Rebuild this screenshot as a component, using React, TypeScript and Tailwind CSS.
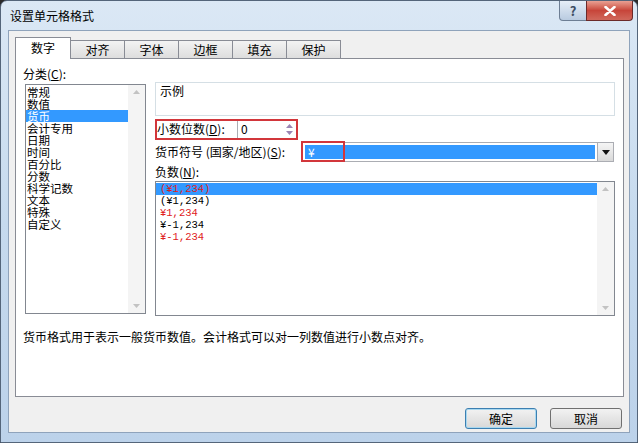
import * as React from 'react'

const font = { fontFamily: '"Noto Sans CJK SC", "Liberation Sans", sans-serif' }
const mono = { fontFamily: '"Liberation Mono", "Noto Sans CJK SC", monospace' }

const tabs = ['数字', '对齐', '字体', '边框', '填充', '保护']
const categories = ['常规', '数值', '货币', '会计专用', '日期', '时间', '百分比', '分数', '科学记数', '文本', '特殊', '自定义']
const negatives = [
	{ text: '(¥1,234)', red: true },
	{ text: '(¥1,234)', red: false },
	{ text: '¥1,234', red: true },
	{ text: '¥-1,234', red: false },
	{ text: '¥-1,234', red: true },
]

function ScrollBar() {
	return (
		<div className="flex h-full w-[17px] flex-col items-center justify-between bg-[#f4f4f4] py-[5px]">
			<svg width="7" height="4" viewBox="0 0 7 4">
				<path d="M0 4 L3.5 0 L7 4 Z" fill="#c2c2c2" />
			</svg>
			<svg width="7" height="4" viewBox="0 0 7 4">
				<path d="M0 0 L3.5 4 L7 0 Z" fill="#c2c2c2" />
			</svg>
		</div>
	)
}

function Tab({ label, active }: { label: string; active: boolean }) {
	if (active) {
		return (
			<div className="relative z-10 flex h-[22px] w-[56px] items-center justify-center border-x border-t border-[#898c95] bg-white pb-[1px] text-[12px] text-black">
				{label}
			</div>
		)
	}
	return (
		<div className="-ml-px flex h-[19px] w-[55px] items-center justify-center border border-b-0 border-[#898c95] bg-gradient-to-b from-[#f3f3f3] to-[#dcdcdc] text-[12px] text-black">
			{label}
		</div>
	)
}

export default function App() {
	return (
		<div className="h-[443px] w-[638px] overflow-hidden bg-[#2a2a2a]" style={font}>
			<div className="flex h-[443px] w-[638px] flex-col rounded-t-[7px] border border-[#54657a] bg-gradient-to-b from-[#dbe8f5] via-[#c6daee] to-[#bcd2ea]">
				{/* title bar */}
				<div className="flex h-[29px] shrink-0 items-start justify-between">
					<div className="pl-[9px] pt-[7px] text-[12px] leading-[16px] text-black">设置单元格格式</div>
					<div className="mr-[4px] flex">
						<div className="flex h-[20px] w-[28px] items-center justify-center rounded-bl-[4px] border border-t-0 border-[#6d7e94] bg-gradient-to-b from-[#e6eef7] to-[#b9cbe0] text-[13px] font-bold leading-none text-[#3d4d63]">
							?
						</div>
						<div className="-ml-px flex h-[20px] w-[47px] items-center justify-center rounded-br-[4px] border border-t-0 border-[#6b2a2a] bg-gradient-to-b from-[#e8a093] via-[#c7453a] to-[#d0685c]">
							<svg width="12" height="10" viewBox="0 0 12 10">
								<path d="M1.5 1 L10.5 9 M10.5 1 L1.5 9" stroke="#ffffff" strokeWidth="2.6" strokeLinecap="round" />
							</svg>
						</div>
					</div>
				</div>

				{/* client area */}
				<div className="mx-[7px] flex h-[403px] flex-col border border-[#8fa3bb] bg-[#f0f0f0] pl-[6px] pr-[7px] pt-[6px]">
					<div className="flex h-[22px] items-end">
						{tabs.map((t, i) => (
							<Tab key={t} label={t} active={i === 0} />
						))}
					</div>
					<div className="-mt-px flex h-[339px] w-[609px] flex-col border border-[#898c95] bg-white pl-[7px] pt-[8px] text-[12px] text-black">
						<div className="flex">
							{/* left column */}
							<div className="flex w-[132px] flex-col">
								<div className="h-[14px] leading-[14px]">分类(<u>C</u>):</div>
								<div className="ml-[2px] mt-[3px] flex h-[230px] w-[121px] border border-[#828790] bg-white">
									<div className="flex flex-1 flex-col pt-[1px]">
										{categories.map((c) => (
											<div
												key={c}
												className={
													c === '货币'
														? 'h-[12px] bg-[#3399ff] pl-[1px] text-[11.5px] leading-[12px] text-white'
														: 'h-[12px] pl-[1px] text-[11.5px] leading-[12px]'
												}
											>
												{c}
											</div>
										))}
									</div>
									<ScrollBar />
								</div>
							</div>

							{/* right column */}
							<div className="flex w-[460px] flex-col">
								<div className="mt-[15px] h-[34px] border border-[#d5dfe5] pl-[4px] pt-[1px] leading-[14px]">示例</div>

								<div className="relative mt-[3px] flex h-[20px] items-center">
									<div className="w-[82px] pl-[2px]">小数位数(<u>D</u>):</div>
									<div className="flex h-[19px] w-[60px] items-center border border-[#abadb3] bg-white">
										<span className="flex-1 pl-[3px]">0</span>
										<div className="flex w-[12px] flex-col items-center gap-[3px] pr-[1px]">
											<svg width="7" height="4" viewBox="0 0 7 4">
												<path d="M0 4 L3.5 0 L7 4 Z" fill="#9a86b4" />
											</svg>
											<svg width="7" height="4" viewBox="0 0 7 4">
												<path d="M0 0 L3.5 4 L7 0 Z" fill="#9a86b4" />
											</svg>
										</div>
									</div>
									<div className="absolute left-0 top-0 h-[21px] w-[143px] border-2 border-[#d2363b]" />
								</div>

								<div className="relative mt-[3px] flex h-[20px] items-center">
									<div className="w-[147px]">货币符号 (国家/地区)(<u>S</u>):</div>
									<div className="flex h-[20px] w-[312px] border border-[#abadb3] bg-white">
										<div className="m-[2px] flex flex-1 items-center bg-[#3399ff] pl-[3px] leading-[12px] text-white">¥</div>
										<div className="flex w-[16px] items-center justify-center border-l border-[#abadb3] bg-gradient-to-b from-[#f5f5f5] to-[#d9d9d9]">
											<svg width="8" height="5" viewBox="0 0 8 5">
												<path d="M0 0 L4 5 L8 0 Z" fill="#111111" />
											</svg>
										</div>
									</div>
									<div className="absolute left-[146px] top-[-1px] h-[21px] w-[44px] border-2 border-[#d2363b]" />
								</div>

								<div className="mt-[3px] h-[14px] leading-[14px]">负数(<u>N</u>):</div>
								<div className="mt-[2px] flex h-[135px] w-[460px] border border-[#828790] bg-white">
									<div className="flex flex-1 flex-col pt-[1px]" style={mono}>
										{negatives.map((n, i) => (
											<div
												key={i}
												className={[
													'h-[12px] pl-[4px] text-[10.5px] leading-[12px]',
													i === 0 ? 'bg-[#3399ff]' : '',
													n.red ? 'text-[#e0201c]' : 'text-black',
												].join(' ')}
											>
												{n.text}
											</div>
										))}
									</div>
									<ScrollBar />
								</div>
							</div>
						</div>

						<div className="mt-[14px] leading-[14px]">货币格式用于表示一般货币数值。会计格式可以对一列数值进行小数点对齐。</div>
					</div>

					{/* buttons */}
					<div className="mt-[11px] flex justify-end gap-[13px]">
						<button className="flex h-[21px] w-[72px] items-center justify-center rounded-[3px] border border-[#3c7fb1] bg-gradient-to-b from-[#f2f2f2] to-[#d8d8d8] text-[12px] text-black shadow-[inset_0_0_0_1px_#a8d8f0]">
							确定
						</button>
						<button className="flex h-[21px] w-[72px] items-center justify-center rounded-[3px] border border-[#707070] bg-gradient-to-b from-[#f2f2f2] to-[#d8d8d8] text-[12px] text-black">
							取消
						</button>
					</div>
				</div>
			</div>
		</div>
	)
}
